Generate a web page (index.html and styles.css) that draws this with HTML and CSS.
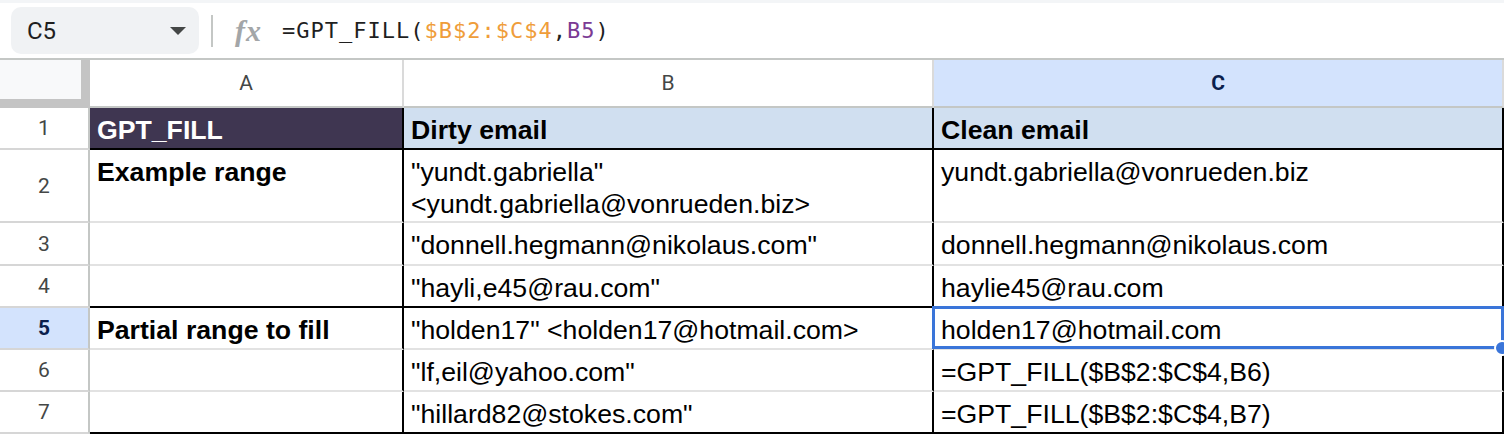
FILE: index.html
```html
<!DOCTYPE html>
<html lang="en">
<head>
    <meta charset="UTF-8">
    <title>GPT_FILL sheet</title>
    <link rel="stylesheet" href="styles.css">
</head>
<body>

    <!-- Name box + formula bar -->
    <div class="toolbar">
        <div class="name-box">
            <span>C5</span>
            <svg class="caret" width="16" height="8" viewBox="0 0 16 8"><path d="M0 0h16L8 8z"/></svg>
        </div>
        <div class="divider"></div>
        <span class="fx">fx</span>
        <div class="formula">=GPT_FILL(<span class="ref-range">$B$2:$C$4</span>,<span class="ref-cell">B5</span>)</div>
    </div>

    <!-- Grid -->
    <div class="sheet">
        <div class="corner"><div class="corner-fill"></div></div>
        <div class="col-head">A</div>
        <div class="col-head">B</div>
        <div class="col-head selected">C</div>

        <div class="row-head">1</div>
        <div class="cell bold title end">GPT_FILL</div>
        <div class="cell bold head end">Dirty email</div>
        <div class="cell bold head end">Clean email</div>

        <div class="row-head">2</div>
        <div class="cell bold">Example range</div>
        <div class="cell wrap">"yundt.gabriella"<br>&lt;yundt.gabriella@vonrueden.biz&gt;</div>
        <div class="cell">yundt.gabriella@vonrueden.biz</div>

        <div class="row-head">3</div>
        <div class="cell"></div>
        <div class="cell">"donnell.hegmann@nikolaus.com"</div>
        <div class="cell">donnell.hegmann@nikolaus.com</div>

        <div class="row-head">4</div>
        <div class="cell end"></div>
        <div class="cell end">"hayli,e45@rau.com"</div>
        <div class="cell end">haylie45@rau.com</div>

        <div class="row-head selected">5</div>
        <div class="cell bold">Partial range to fill</div>
        <div class="cell">"holden17" &lt;holden17@hotmail.com&gt;</div>
        <div class="cell active">holden17@hotmail.com</div>

        <div class="row-head">6</div>
        <div class="cell"></div>
        <div class="cell">"lf,eil@yahoo.com"</div>
        <div class="cell">=GPT_FILL($B$2:$C$4,B6)</div>

        <div class="row-head">7</div>
        <div class="cell end"></div>
        <div class="cell end">"hillard82@stokes.com"</div>
        <div class="cell end">=GPT_FILL($B$2:$C$4,B7)</div>
    </div>

</body>
</html>
```

FILE: styles.css
```css
/* Basic Reset */
* {
    margin: 0;
    padding: 0;
    box-sizing: border-box;
}

body {
    font-family: 'Liberation Sans', Arial, sans-serif;
    background-color: #fff;
    width: 1504px;
    height: 434px;
    overflow: hidden;
}

/* Toolbar */
.toolbar {
    height: 60px;
    display: flex;
    align-items: center;
    border-top: 3px solid #f3f5f7;
    border-bottom: 2px solid #c4c7c5;
}

.name-box {
    width: 188px;
    height: 47px;
    margin-left: 11px;
    padding: 0 13px 0 16px;
    background-color: #f0f2f4;
    border-radius: 10px;
    display: flex;
    align-items: center;
    justify-content: space-between;
    font-family: Roboto, sans-serif;
    font-size: 24px;
    color: #1f1f1f;
}

.caret {
    fill: #444746;
}

.divider {
    width: 2px;
    height: 32px;
    margin-left: 12px;
    background-color: #c4c7c5;
}

.fx {
    margin-left: 22px;
    font-family: 'Liberation Serif', serif;
    font-style: italic;
    font-weight: bold;
    font-size: 30px;
    letter-spacing: 1px;
    color: #a3a6a8;
}

.formula {
    margin-left: 20px;
    font-family: 'DejaVu Sans Mono', monospace;
    font-size: 22px;
    letter-spacing: 1px;
    color: #1f1f1f;
}

.ref-range {
    color: #ef9d3a;
}

.ref-cell {
    color: #7b3a94;
}

/* Sheet grid */
.sheet {
    display: grid;
    grid-template-columns: 90px 314px 530px 570px;
    grid-template-rows: 48px 42px 73px 43px 42px 42px 42px 42px;
}

.corner {
    background-color: #c4c4c4;
}

.corner-fill {
    width: 81px;
    height: 39px;
    background-color: #f8f9fa;
}

.col-head {
    display: flex;
    align-items: center;
    justify-content: center;
    font-family: Roboto, sans-serif;
    font-size: 21px;
    color: #444746;
    border-right: 2px solid #dadada;
    border-bottom: 2px solid #c4c7c5;
}

.row-head {
    display: flex;
    align-items: center;
    justify-content: center;
    font-family: Roboto, sans-serif;
    font-size: 21px;
    color: #444746;
    border-right: 2px solid #c4c7c5;
    border-bottom: 2px solid #d6d6d6;
}

.col-head.selected,
.row-head.selected {
    background-color: #d3e3fd;
    color: #0b1f4d;
    font-weight: bold;
}

.cell {
    position: relative;
    padding: 6px 7px 0;
    font-size: 26.67px;
    line-height: 32px;
    color: #000;
    white-space: nowrap;
    border-right: 2px solid #000;
    border-bottom: 2px solid #e2e2e2;
}

.cell.wrap {
    white-space: normal;
}

.cell.end {
    border-bottom-color: #000;
}

.bold {
    font-weight: bold;
}

.title {
    background-color: #3f3651;
    color: #fff;
}

.head {
    background-color: #d0dff0;
}

/* Active cell selection */
.active::after {
    content: '';
    position: absolute;
    top: -2px;
    left: -2px;
    right: -2px;
    bottom: -1px;
    border: 3px solid #3a75d9;
}

.active::before {
    content: '';
    position: absolute;
    right: -8px;
    bottom: -8px;
    width: 12px;
    height: 12px;
    border-radius: 50%;
    background-color: #3a75d9;
    border: 2px solid #fff;
    z-index: 1;
}
```
